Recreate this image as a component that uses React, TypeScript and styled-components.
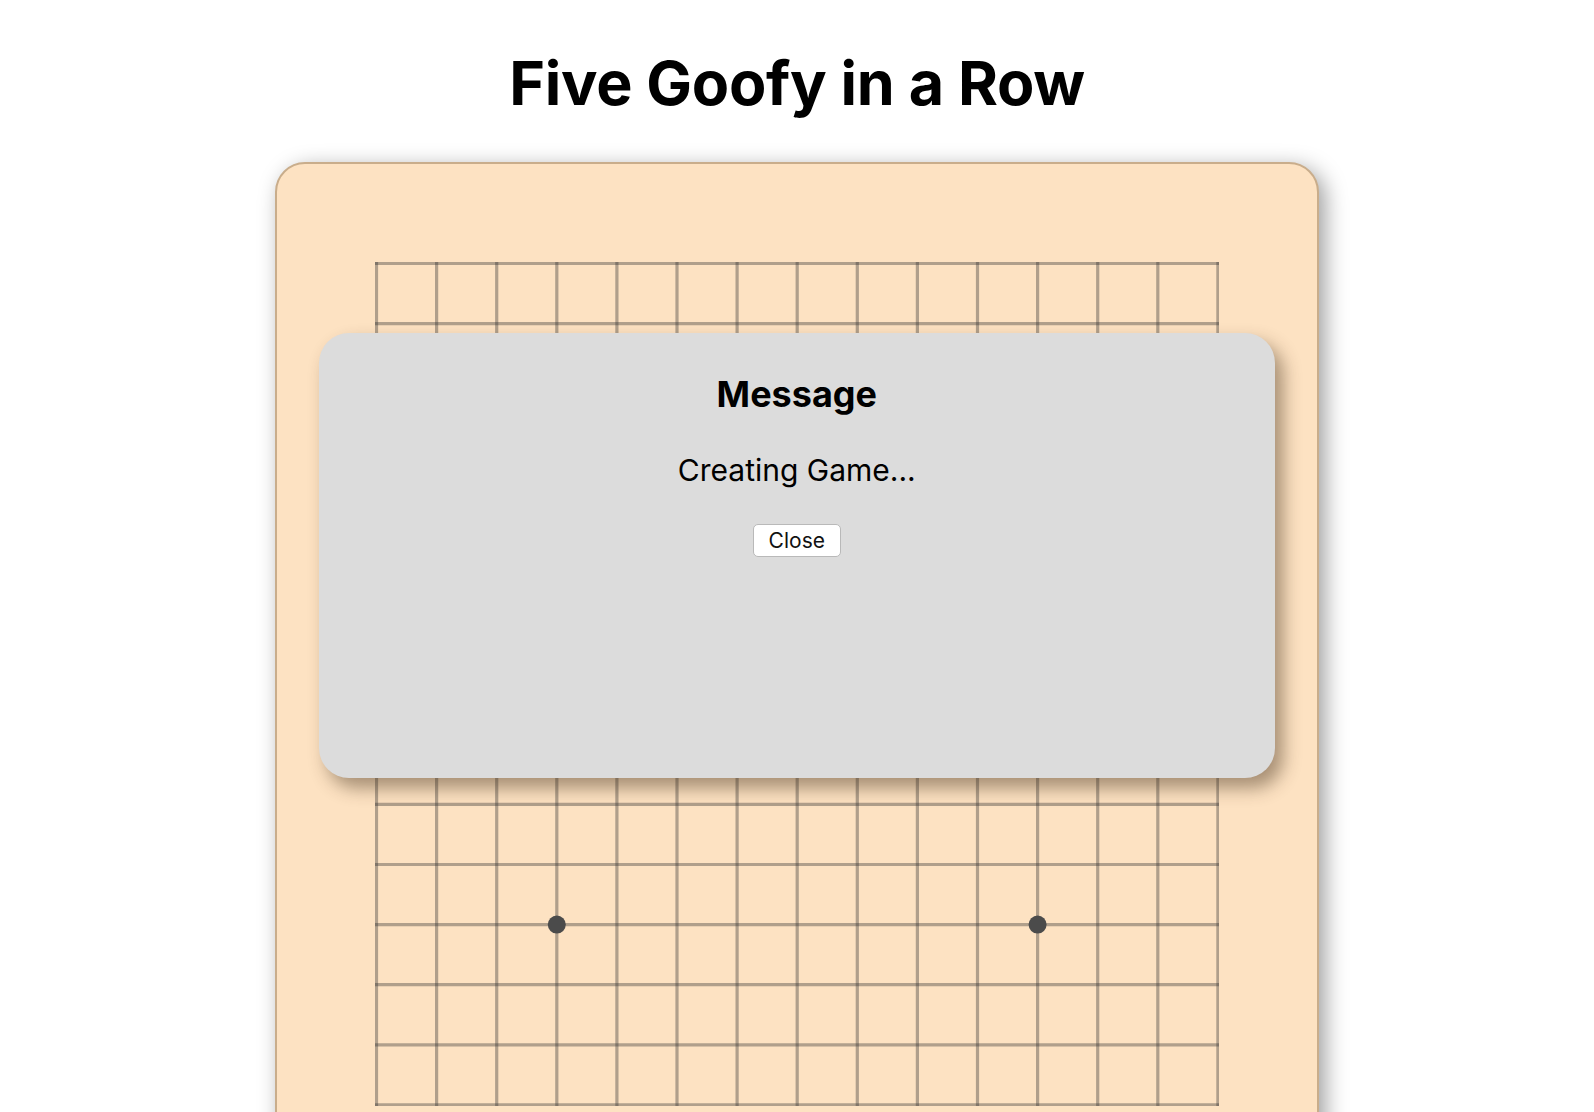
import styled, { createGlobalStyle } from "styled-components";

const GlobalStyle = createGlobalStyle`
  html, body {
    margin: 0;
    padding: 0;
    background: #ffffff;
    font-family: Inter, "Noto Sans", sans-serif;
    color: #000;
  }
`;

const Page = styled.div`
  display: flex;
  flex-direction: column;
  align-items: center;
  padding-top: 46px;
`;

const Title = styled.h1`
  margin: 0 0 42px;
  font-size: 61px;
  font-weight: 700;
  line-height: 74px;
  letter-spacing: -0.3px;
`;

const Board = styled.div`
  position: relative;
  padding: 98px;
  background: #fde2c2;
  border: 2px solid #c9ad8b;
  border-radius: 30px;
  box-shadow: 6px 6px 22px rgba(0, 0, 0, 0.38);
  display: flex;
`;

const Modal = styled.div`
  position: absolute;
  left: 42px;
  top: 169px;
  width: 956px;
  height: 445px;
  background: #dcdcdc;
  border-radius: 30px;
  box-shadow: 8px 10px 18px rgba(60, 40, 20, 0.45);
  display: flex;
  flex-direction: column;
  align-items: center;
  padding-top: 39px;
  box-sizing: border-box;
`;

const ModalTitle = styled.h2`
  margin: 0;
  font-size: 36px;
  font-weight: 700;
  line-height: 44px;
`;

const ModalText = styled.p`
  margin: 36px 0 0;
  font-size: 30px;
  font-weight: 400;
  line-height: 36px;
`;

const CloseButton = styled.button`
  margin-top: 36px;
  width: 88px;
  height: 33px;
  background: #ffffff;
  border: 1px solid #b9b9b9;
  border-radius: 5px;
  font-family: Inter, "Noto Sans", sans-serif;
  font-size: 21px;
  color: #111;
  padding: 0;
  cursor: pointer;
`;

const SIZE = 15;
const STEP = 60.1;
const PAD = 1.5;
const stars = [
  [3, 3],
  [11, 3],
  [7, 7],
  [3, 11],
  [11, 11],
];

function Grid() {
  const span = STEP * (SIZE - 1);
  const lines = Array.from({ length: SIZE }, (_, i) => PAD + i * STEP);
  return (
    <svg width={span + PAD * 2} height={span + PAD * 2} style={{ display: "block" }}>
      <g stroke="rgba(50, 50, 50, 0.38)" strokeWidth={3.2} strokeLinecap="square">
        {lines.map((p) => (
          <line key={"h" + p} x1={PAD} y1={p} x2={PAD + span} y2={p} />
        ))}
        {lines.map((p) => (
          <line key={"v" + p} x1={p} y1={PAD} x2={p} y2={PAD + span} />
        ))}
      </g>
      {stars.map(([x, y]) => (
        <circle key={x + "-" + y} cx={PAD + x * STEP} cy={PAD + y * STEP} r={9} fill="#4b4b4b" />
      ))}
    </svg>
  );
}

export default function App() {
  return (
    <Page>
      <GlobalStyle />
      <Title>Five Goofy in a Row</Title>
      <Board>
        <Grid />
        <Modal>
          <ModalTitle>Message</ModalTitle>
          <ModalText>Creating Game...</ModalText>
          <CloseButton>Close</CloseButton>
        </Modal>
      </Board>
    </Page>
  );
}
